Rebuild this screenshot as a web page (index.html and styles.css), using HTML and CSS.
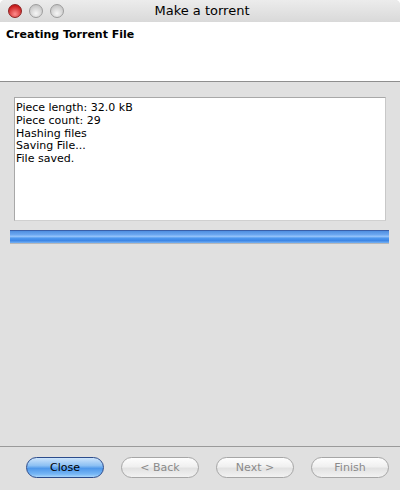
FILE: index.html
```html
<!DOCTYPE html>
<html lang="en">
<head>
  <meta charset="UTF-8" />
  <title>Make a torrent</title>
  <link rel="stylesheet" href="styles.css">
</head>
<body>
  <div class="window">
    <div class="titlebar">
      <div class="lights">
        <span class="light close-light"></span>
        <span class="light"></span>
        <span class="light"></span>
      </div>
      <div class="title">Make a torrent</div>
    </div>

    <div class="header">Creating Torrent File</div>

    <div class="content">
      <div class="log">
        Piece length: 32.0 kB<br />
        Piece count: 29<br />
        Hashing files<br />
        Saving File...<br />
        File saved.
      </div>
      <div class="progress"></div>
    </div>

    <div class="buttons">
      <button class="btn primary">Close</button>
      <button class="btn" disabled>&lt; Back</button>
      <button class="btn" disabled>Next &gt;</button>
      <button class="btn" disabled>Finish</button>
    </div>
  </div>
</body>
</html>
```

FILE: styles.css
```css
* { box-sizing: border-box; }
body {
  margin: 0;
  font-family: 'DejaVu Sans', 'Liberation Sans', sans-serif;
  background: #fff;
}

.window {
  width: 400px;
  height: 490px;
  display: flex;
  flex-direction: column;
  background: #e0e0e0;
  border-radius: 5px 5px 0 0;
  overflow: hidden;
}

.titlebar {
  height: 22px;
  position: relative;
  background: linear-gradient(to bottom, #ececec, #d9d9d9);
  display: flex;
  align-items: center;
}

.lights {
  display: flex;
  gap: 7px;
  padding-left: 8px;
}

.light {
  width: 14px;
  height: 14px;
  border-radius: 50%;
  background: radial-gradient(circle at 50% 70%, #f6f6f6, #c4c4c4 80%);
  border: 1px solid #9c9c9c;
}

.close-light {
  background: radial-gradient(circle at 50% 75%, #ff8c8c, #c81c1c 75%);
  border-color: #8c2020;
}

.title {
  position: absolute;
  left: 0;
  right: 0;
  top: 3px;
  text-align: center;
  font-size: 13px;
  color: #000;
  padding-left: 4px;
}

.header {
  height: 60px;
  background: #fff;
  border-bottom: 1px solid #8e8e8e;
  font-size: 11px;
  font-weight: bold;
  padding: 6px 6px;
}

.content {
  flex: 1;
  padding: 15px 11px 0 10px;
  border-bottom: 1px solid #9a9a9a;
}

.log {
  margin-left: 4px;
  margin-right: 3px;
  height: 124px;
  background: #fff;
  border: 1px solid #a8a8a8;
  border-right-color: #c8c8c8;
  border-bottom-color: #d0d0d0;
  font-size: 11px;
  line-height: 12.8px;
  padding: 4px 1px;
}

.progress {
  margin-top: 9px;
  height: 13px;
  border-top: 1px solid #3a5fa8;
  background: linear-gradient(to bottom, #4f8fe0 0%, #6aa6f0 30%, #94c3fa 45%, #4e98ee 60%, #3c86e6 80%, #78b2f2 100%);
  box-shadow: 0 1px 0 #b8b8b8;
}

.buttons {
  height: 43px;
  display: flex;
  gap: 17px;
  padding: 10px 0 0 26px;
}

.btn {
  width: 78px;
  height: 21px;
  border-radius: 11px;
  border: 1px solid #a6a6a6;
  background: linear-gradient(to bottom, #fdfdfd 0%, #f0f0f0 45%, #e2e2e2 55%, #f2f2f2 100%);
  font-family: 'DejaVu Sans', 'Liberation Sans', sans-serif;
  font-size: 11px;
  color: #8a8a8a;
  padding: 0;
}

.btn.primary {
  color: #000;
  border-color: #2c4c8c;
  background: linear-gradient(to bottom, #cde4fb 0%, #8cc0f3 40%, #4f98ea 55%, #76b6f5 85%, #a8d6fb 100%);
}
```
